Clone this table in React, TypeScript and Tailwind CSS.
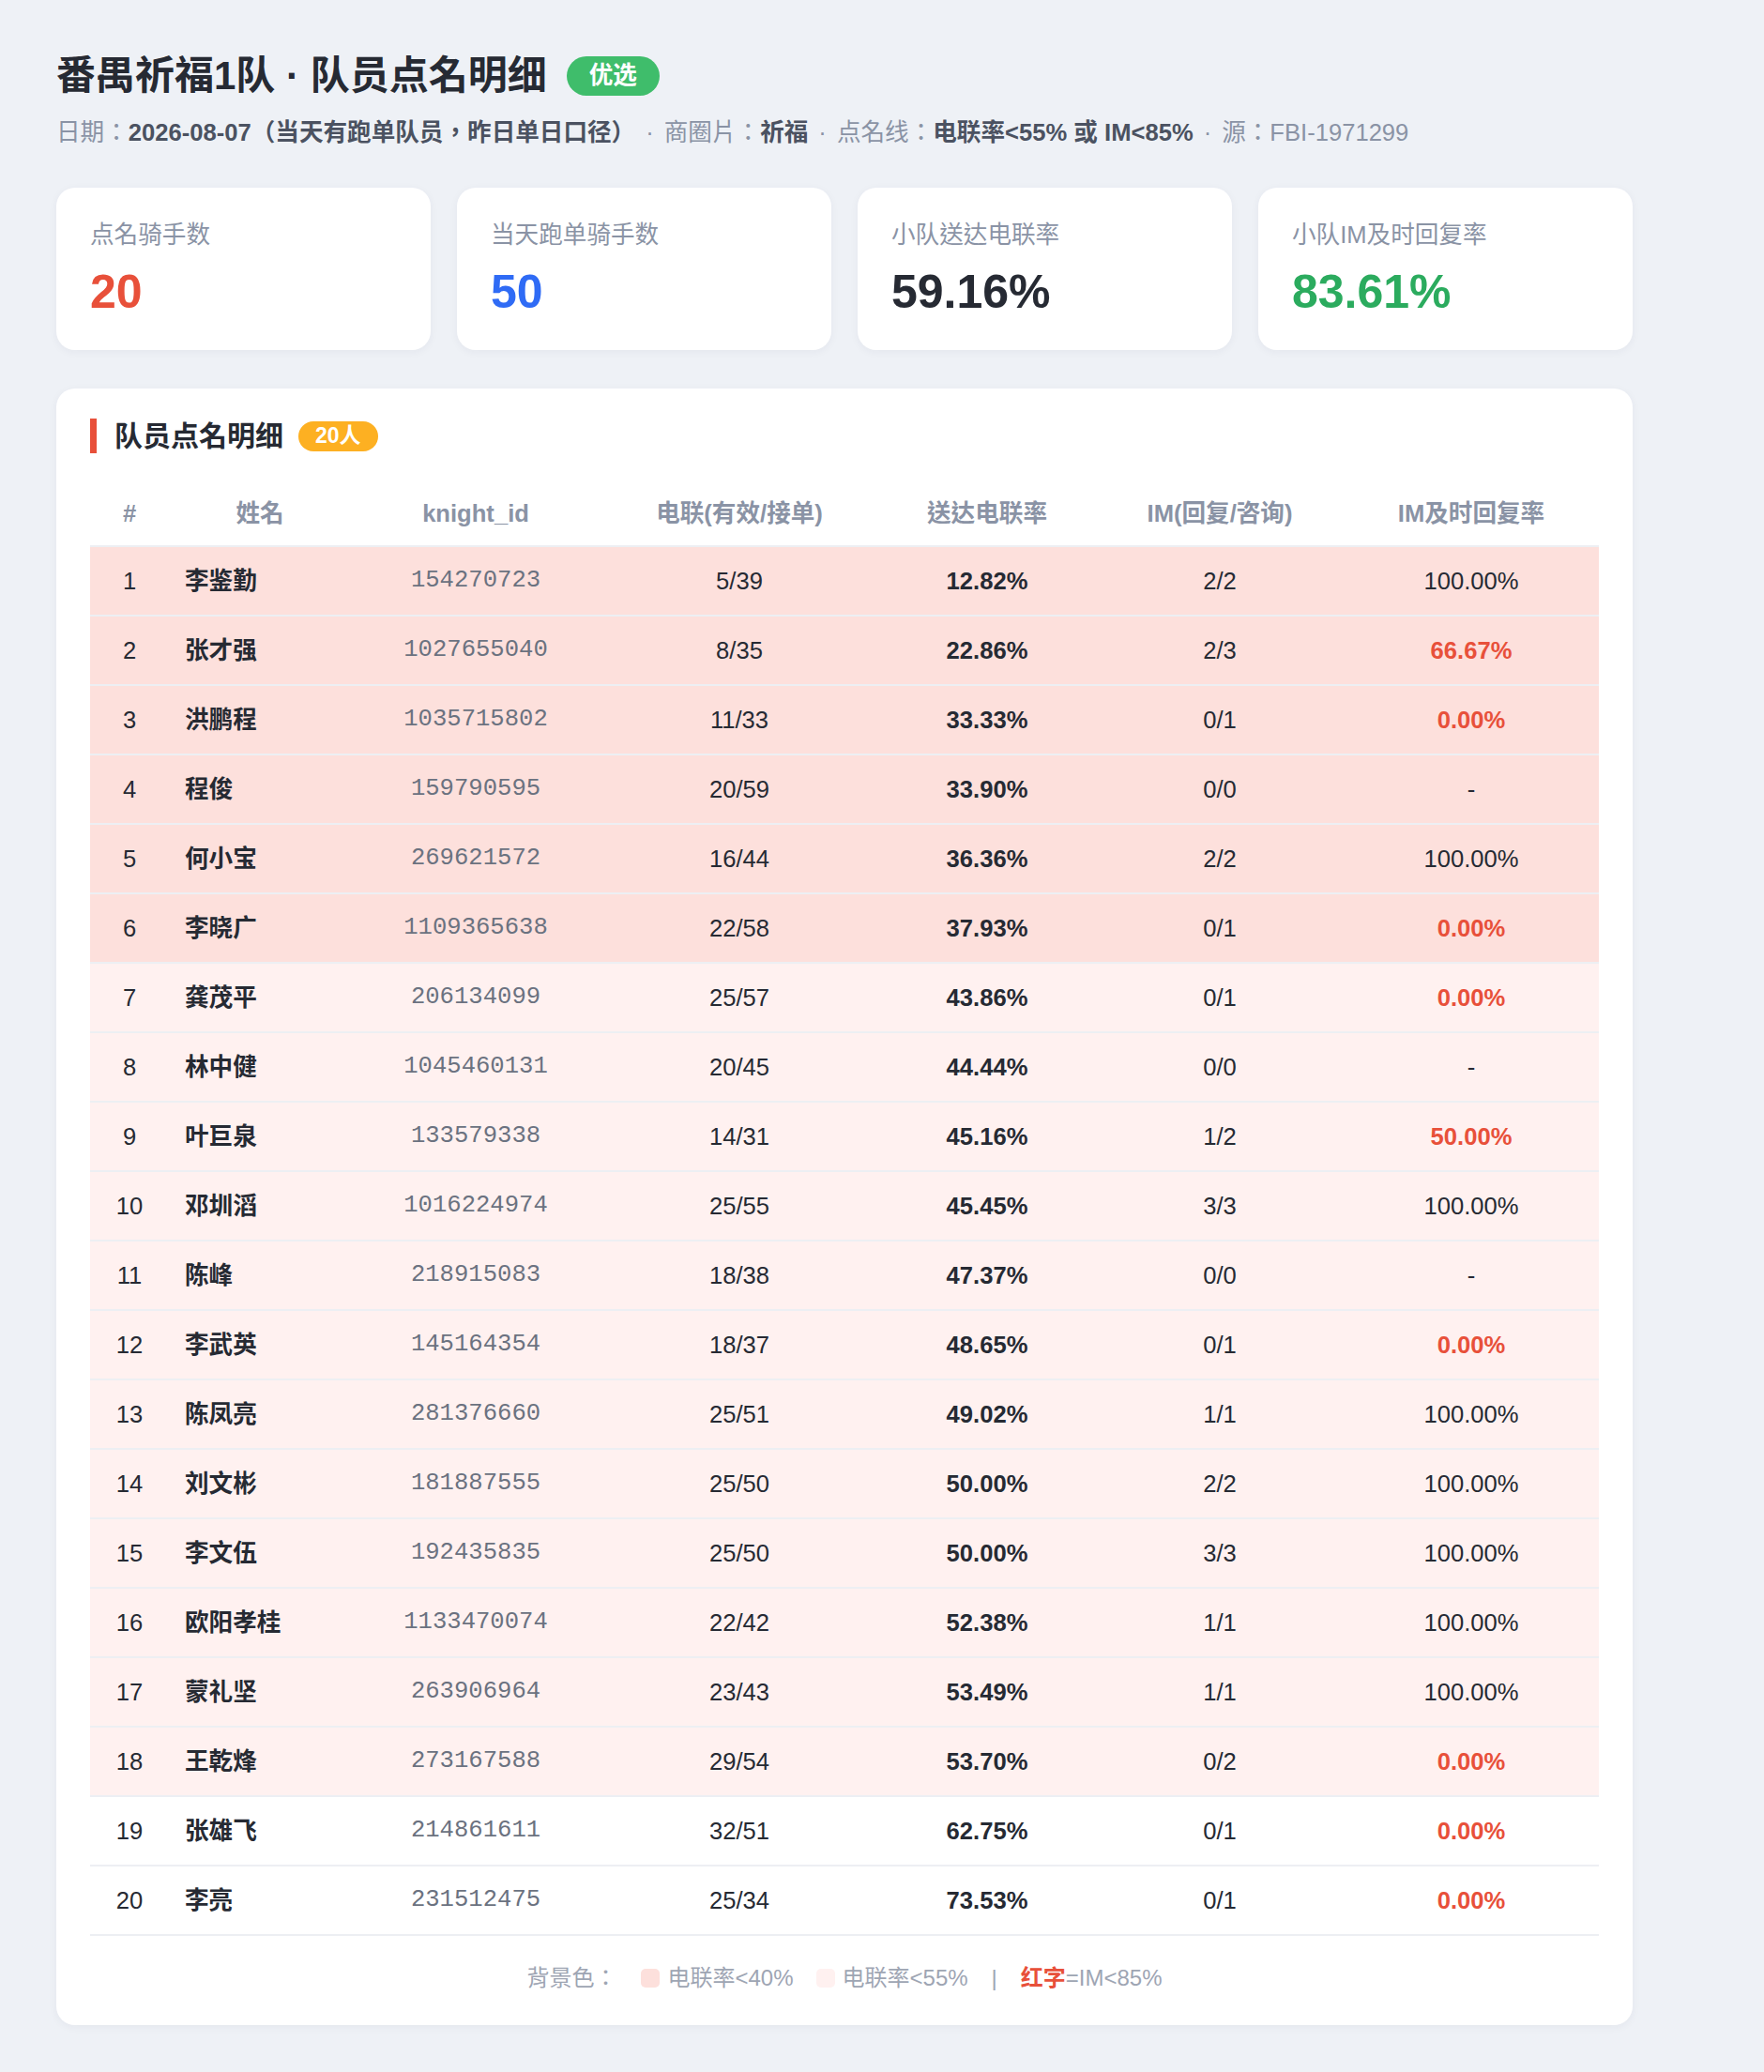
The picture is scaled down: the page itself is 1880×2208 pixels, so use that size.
import React from 'react';

type Row = {
  name: string;
  id: string;
  call: string;
  rate: number;
  im: string;
  imRate: number | null;
};

const rows: Row[] = [
  { name: '李鉴勤', id: '154270723', call: '5/39', rate: 12.82, im: '2/2', imRate: 100 },
  { name: '张才强', id: '1027655040', call: '8/35', rate: 22.86, im: '2/3', imRate: 66.67 },
  { name: '洪鹏程', id: '1035715802', call: '11/33', rate: 33.33, im: '0/1', imRate: 0 },
  { name: '程俊', id: '159790595', call: '20/59', rate: 33.9, im: '0/0', imRate: null },
  { name: '何小宝', id: '269621572', call: '16/44', rate: 36.36, im: '2/2', imRate: 100 },
  { name: '李晓广', id: '1109365638', call: '22/58', rate: 37.93, im: '0/1', imRate: 0 },
  { name: '龚茂平', id: '206134099', call: '25/57', rate: 43.86, im: '0/1', imRate: 0 },
  { name: '林中健', id: '1045460131', call: '20/45', rate: 44.44, im: '0/0', imRate: null },
  { name: '叶巨泉', id: '133579338', call: '14/31', rate: 45.16, im: '1/2', imRate: 50 },
  { name: '邓圳滔', id: '1016224974', call: '25/55', rate: 45.45, im: '3/3', imRate: 100 },
  { name: '陈峰', id: '218915083', call: '18/38', rate: 47.37, im: '0/0', imRate: null },
  { name: '李武英', id: '145164354', call: '18/37', rate: 48.65, im: '0/1', imRate: 0 },
  { name: '陈凤亮', id: '281376660', call: '25/51', rate: 49.02, im: '1/1', imRate: 100 },
  { name: '刘文彬', id: '181887555', call: '25/50', rate: 50.0, im: '2/2', imRate: 100 },
  { name: '李文伍', id: '192435835', call: '25/50', rate: 50.0, im: '3/3', imRate: 100 },
  { name: '欧阳孝桂', id: '1133470074', call: '22/42', rate: 52.38, im: '1/1', imRate: 100 },
  { name: '蒙礼坚', id: '263906964', call: '23/43', rate: 53.49, im: '1/1', imRate: 100 },
  { name: '王乾烽', id: '273167588', call: '29/54', rate: 53.7, im: '0/2', imRate: 0 },
  { name: '张雄飞', id: '214861611', call: '32/51', rate: 62.75, im: '0/1', imRate: 0 },
  { name: '李亮', id: '231512475', call: '25/34', rate: 73.53, im: '0/1', imRate: 0 },
];

const stats = [
  { label: '点名骑手数', value: '20', color: 'text-[#e8503a]' },
  { label: '当天跑单骑手数', value: '50', color: 'text-[#2f6bf5]' },
  { label: '小队送达电联率', value: '59.16%', color: 'text-[#262a33]' },
  { label: '小队IM及时回复率', value: '83.61%', color: 'text-[#2bab5e]' },
];

function rowBg(rate: number) {
  if (rate < 40) return 'bg-[#fde0dc]';
  if (rate < 55) return 'bg-[#fff1f0]';
  return 'bg-white';
}

function Sep() {
  return <span className="mx-[11px]">·</span>;
}

export default function App() {
  return (
    <div className="min-h-screen bg-[#eef1f6] px-[60px] pt-[54px] pb-[53px] [text-spacing-trim:space-all] font-['Liberation_Sans','Noto_Sans_CJK_TC',sans-serif]">
      <div className="w-[1680px]">
        {/* Header */}
        <div className="flex items-center h-[53px]">
          <h1 className="text-[42px] font-bold text-[#262a33] leading-none">番禺祈福1队 · 队员点名明细</h1>
          <span className="ml-[21px] h-[42px] px-[24px] rounded-full bg-[#3fbd6b] text-white text-[25.6px] font-bold flex items-center">
            优选
          </span>
        </div>
        <p className="mt-[15px] text-[25.6px] leading-[38px] text-[#8a93a5]">
          日期：<b className="text-[#4b5261]">2026-08-07（当天有跑单队员，昨日单日口径）</b>
          <Sep />商圈片：<b className="text-[#4b5261]">祈福</b>
          <Sep />点名线：<b className="text-[#4b5261]">电联率&lt;55% 或 IM&lt;85%</b>
          <Sep />源：FBI-1971299
        </p>

        {/* Stat cards */}
        <div className="mt-[40px] grid grid-cols-4 gap-[28px]">
          {stats.map((s) => (
            <div
              key={s.label}
              className="h-[173px] bg-white rounded-[20px] px-[36px] pt-[32px] shadow-[0_2px_10px_rgba(30,40,70,0.05)]"
            >
              <div className="text-[25.6px] leading-[36px] text-[#8a93a5]">{s.label}</div>
              <div className={`mt-[14px] text-[50px] leading-[58px] font-bold ${s.color}`}>{s.value}</div>
            </div>
          ))}
        </div>

        {/* Detail table */}
        <div className="mt-[41px] bg-white rounded-[20px] px-[36px] pt-[32px] pb-[32px] shadow-[0_2px_10px_rgba(30,40,70,0.05)]">
          <div className="flex items-center h-[37px]">
            <div className="w-[7px] h-[37px] bg-[#e8503a]" />
            <h2 className="ml-[19px] text-[30px] font-bold text-[#262a33] leading-none">队员点名明细</h2>
            <span className="ml-[16px] h-[32px] px-[18px] rounded-full bg-[#fdb022] text-white text-[23px] font-bold flex items-center">
              20人
            </span>
          </div>

          <table className="mt-[31px] w-full table-fixed border-collapse text-[25.6px]">
            <colgroup>
              <col className="w-[84px]" />
              <col className="w-[194px]" />
              <col className="w-[266px]" />
              <col className="w-[296px]" />
              <col className="w-[232px]" />
              <col className="w-[264px]" />
              <col className="w-[272px]" />
            </colgroup>
            <thead>
              <tr className="h-[68px] border-b-2 border-[#edeff3] text-[#8a93a5]">
                <th className="font-bold text-center">#</th>
                <th className="font-bold text-center">姓名</th>
                <th className="font-bold text-center">knight_id</th>
                <th className="font-bold text-center">电联(有效/接单)</th>
                <th className="font-bold text-center">送达电联率</th>
                <th className="font-bold text-center">IM(回复/咨询)</th>
                <th className="font-bold text-center">IM及时回复率</th>
              </tr>
            </thead>
            <tbody>
              {rows.map((r, i) => {
                const imBad = r.imRate !== null && r.imRate < 85;
                return (
                  <tr key={r.id} className={`h-[74px] border-b-2 border-[#edeff3] text-[#262a33] ${rowBg(r.rate)}`}>
                    <td className="text-center">{i + 1}</td>
                    <td className="pl-[17px] font-bold">{r.name}</td>
                    <td className="text-center font-['Liberation_Mono',monospace] text-[#6b7280]">{r.id}</td>
                    <td className="text-center">{r.call}</td>
                    <td className="text-center font-bold">{r.rate.toFixed(2)}%</td>
                    <td className="text-center">{r.im}</td>
                    <td className={`text-center ${imBad ? 'text-[#e8503a] font-bold' : ''}`}>
                      {r.imRate === null ? '-' : `${r.imRate.toFixed(2)}%`}
                    </td>
                  </tr>
                );
              })}
            </tbody>
          </table>

          <div className="mt-[27px] flex items-center justify-center text-[24px] leading-[36px] text-[#9ea5b3]">
            <span>背景色：</span>
            <span className="ml-[26px] w-[20px] h-[20px] rounded-[5px] bg-[#fde0dc]" />
            <span className="ml-[8px]">电联率&lt;40%</span>
            <span className="ml-[24px] w-[20px] h-[20px] rounded-[5px] bg-[#fff1f0]" />
            <span className="ml-[8px]">电联率&lt;55%</span>
            <span className="mx-[25px]">|</span>
            <b className="text-[#e8503a]">红字</b>
            <span>=IM&lt;85%</span>
          </div>
        </div>
      </div>
    </div>
  );
}
